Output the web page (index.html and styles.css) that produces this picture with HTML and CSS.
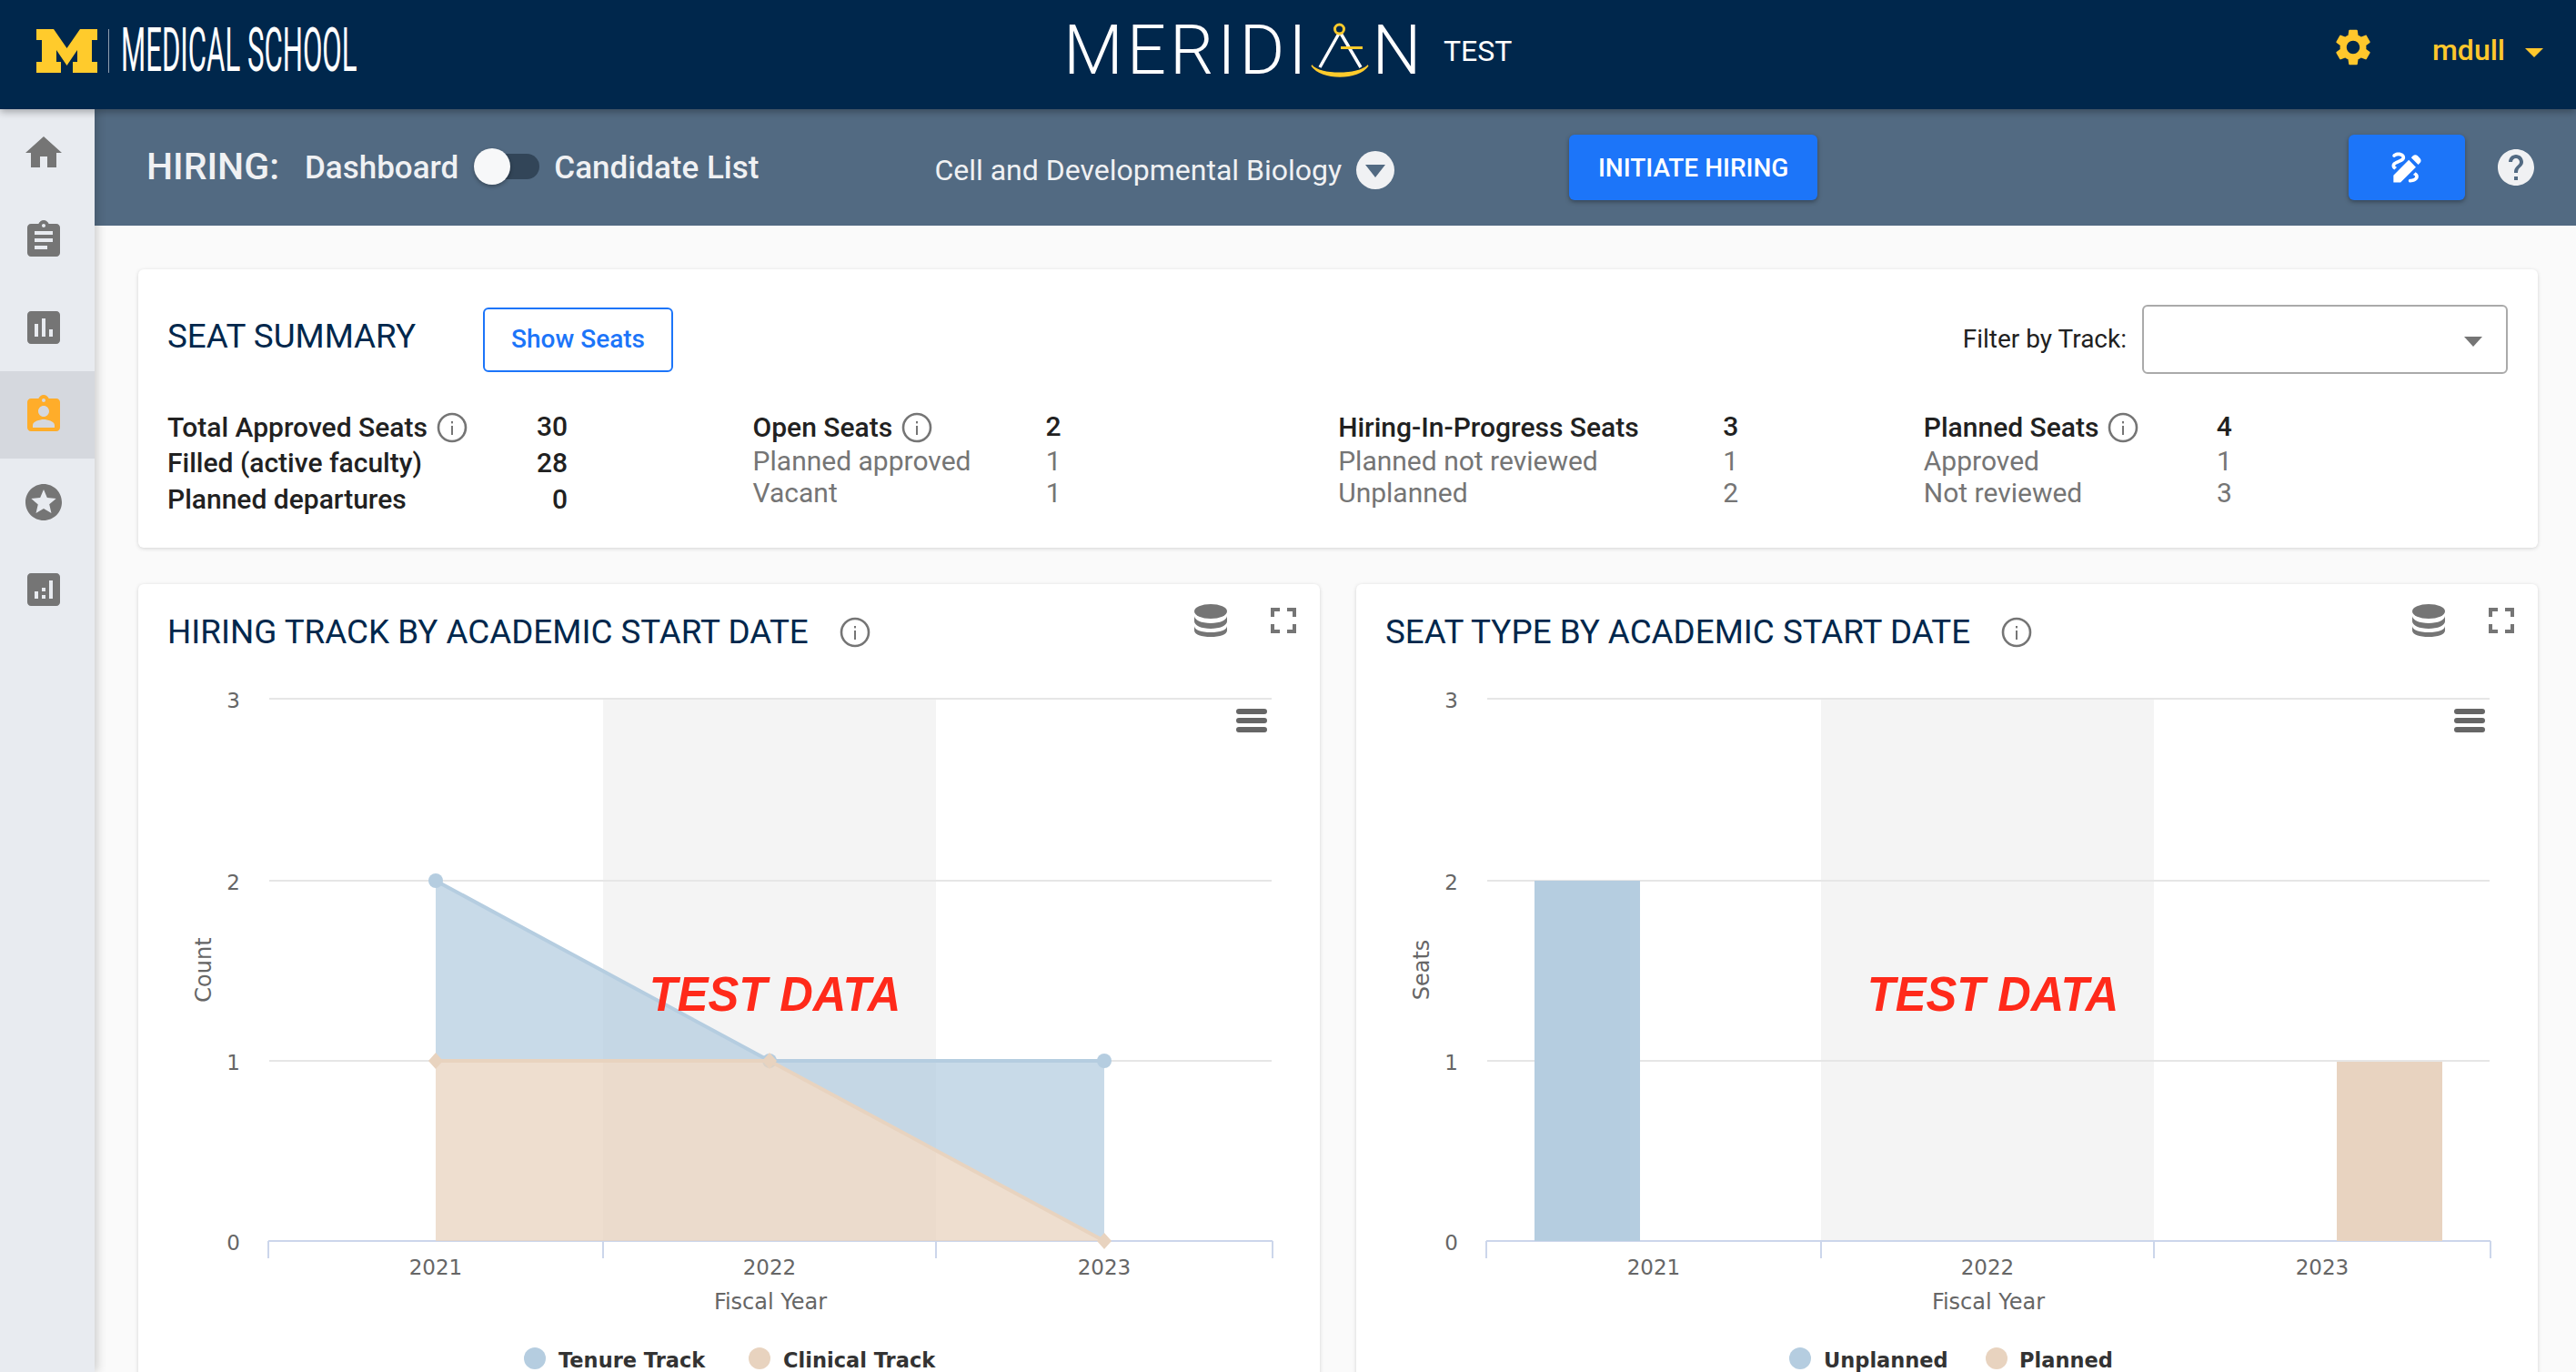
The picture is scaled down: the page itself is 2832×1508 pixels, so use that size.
FILE: index.html
```html
<!DOCTYPE html>
<html lang="en">
<head>
    <meta charset="UTF-8">
    <title>Meridian - Hiring Dashboard</title>
    <link rel="stylesheet" href="styles.css">
</head>
<body>
    <!-- shared icons -->
    <svg class="icon-defs" width="0" height="0">
        <symbol id="icon-info" viewBox="0 0 34 34">
            <circle cx="17" cy="17" r="15" fill="none" stroke="currentColor" stroke-width="2.6"/>
            <rect x="16" y="15" width="2" height="10"/>
            <rect x="16" y="10" width="2" height="2.4"/>
        </symbol>
        <symbol id="icon-db" viewBox="0 0 36 36">
            <ellipse cx="18" cy="8" rx="18" ry="8"/>
            <path d="M0 13c0 4.400 8 8 18 8s18-3.600 18-8v6c0 4.400-8 8-18 8s-18-3.600-18-8z"/>
            <path d="M0 24c0 4.400 8 7 18 7s18-2.600 18-7v5c0 4.400-8 7-18 7s-18-2.600-18-7z"/>
        </symbol>
        <symbol id="icon-expand" viewBox="0 0 24 24">
            <path d="M7 14H5v5h5v-2H7v-3zm-2-4h2V7h3V5H5v5zm12 7h-3v2h5v-5h-2v3zM14 5v2h3v3h2V5h-5z"/>
        </symbol>
    </svg>

    <div class="page">
        <header class="topbar">
            <div class="brand">
                <svg class="brand-m" viewBox="0 0 67 48"><path d="M0 0H19L33.500 21 48 0H67V12H61V36H67V48H40V36H45V23L33.500 40 22 23V36H27V48H0V36H6V12H0Z"/></svg>
                <span class="brand-rule"></span>
                <span class="brand-name"><span>MEDICAL SCHOOL</span></span>
            </div>
            <div class="app-name">
                <span>MERIDI</span>
                <svg class="app-a" viewBox="0 0 64 56">
                    <path d="M32 9L10 48M32 9L55 48" fill="none" stroke="#fff" stroke-width="3.500"/>
                    <ellipse cx="31.500" cy="6" rx="5" ry="5" fill="#00274c" stroke="#ffcb2c" stroke-width="3"/>
                    <rect x="33" y="25" width="24" height="3" fill="#ffcb2c"/>
                    <path d="M1 46C12 57 50 57 63 46C52 62 12 62 1 46Z" fill="#ffcb2c" stroke="#ffcb2c" stroke-width="1.500"/>
                </svg>
                <span>N</span>
            </div>
            <span class="app-env">TEST</span>
            <div class="user-area">
                <svg class="gear" viewBox="0 0 24 24"><path d="M19.140 12.940c.04-.3.060-.61.060-.94 0-.32-.02-.64-.07-.94l2.030-1.580c.18-.14.230-.41.120-.61l-1.920-3.320c-.12-.22-.37-.29-.59-.22l-2.390.96c-.5-.38-1.030-.7-1.620-.94l-.36-2.540c-.04-.24-.24-.41-.48-.41h-3.840c-.24 0-.43.170-.47.410l-.36 2.540c-.59.240-1.130.570-1.620.94l-2.390-.96c-.22-.08-.47 0-.59.220L2.740 8.870c-.12.210-.08.470.12.610l2.030 1.580c-.05.3-.09.630-.09.940s.02.640.07.940l-2.030 1.580c-.18.140-.23.410-.12.610l1.920 3.320c.12.220.37.290.59.220l2.390-.96c.5.380 1.030.7 1.620.94l.36 2.540c.05.240.24.410.48.410h3.840c.24 0 .44-.17.470-.41l.36-2.540c.59-.24 1.130-.56 1.620-.94l2.390.96c.22.080.47 0 .59-.22l1.920-3.320c.12-.22.070-.47-.12-.61l-2.010-1.580zM12 15.600c-1.980 0-3.600-1.620-3.600-3.600s1.620-3.600 3.600-3.600 3.600 1.620 3.600 3.600-1.620 3.600-3.600 3.600z"/></svg>
                <span class="user-name">mdull</span>
                <span class="user-caret"></span>
            </div>
        </header>

        <div class="body-row">
            <nav class="sidenav">
                <div class="nav-item"><svg viewBox="0 0 24 24"><path d="M10 20v-6h4v6h5v-8h3L12 3 2 12h3v8z"/></svg></div>
                <div class="nav-item"><svg viewBox="0 0 24 24"><path d="M19 3h-4.180C14.400 1.840 13.300 1 12 1c-1.300 0-2.400.84-2.820 2H5c-1.100 0-2 .9-2 2v14c0 1.100.9 2 2 2h14c1.100 0 2-.9 2-2V5c0-1.100-.9-2-2-2zm-7 0c.55 0 1 .45 1 1s-.45 1-1 1-1-.45-1-1 .45-1 1-1zm2 14H7v-2h7v2zm3-4H7v-2h10v2zm0-4H7V7h10v2z"/></svg></div>
                <div class="nav-item"><svg viewBox="0 0 24 24"><path d="M19 3H5c-1.100 0-2 .9-2 2v14c0 1.100.9 2 2 2h14c1.100 0 2-.9 2-2V5c0-1.100-.9-2-2-2zM9 17H7v-7h2v7zm4 0h-2V7h2v10zm4 0h-2v-4h2v4z"/></svg></div>
                <div class="nav-item nav-active"><svg viewBox="0 0 24 24"><path d="M19 3h-4.180C14.400 1.840 13.300 1 12 1c-1.300 0-2.400.84-2.820 2H5c-1.100 0-2 .9-2 2v14c0 1.100.9 2 2 2h14c1.100 0 2-.9 2-2V5c0-1.100-.9-2-2-2zm-7 0c.55 0 1 .45 1 1s-.45 1-1 1-1-.45-1-1 .45-1 1-1zm0 4c1.660 0 3 1.340 3 3s-1.340 3-3 3-3-1.340-3-3 1.340-3 3-3zm6 12H6v-1.400c0-2 4-3.100 6-3.100s6 1.100 6 3.100V19z"/></svg></div>
                <div class="nav-item"><svg viewBox="0 0 24 24"><path d="M11.990 2C6.470 2 2 6.480 2 12s4.470 10 9.990 10C17.520 22 22 17.520 22 12S17.520 2 11.990 2zm4.240 16L12 15.450 7.770 18l1.120-4.810-3.730-3.230 4.920-.42L12 5l1.920 4.530 4.920.42-3.730 3.230L16.230 18z"/></svg></div>
                <div class="nav-item"><svg viewBox="0 0 24 24"><path d="M19 3H5c-1.100 0-2 .9-2 2v14c0 1.100.9 2 2 2h14c1.100 0 2-.9 2-2V5c0-1.100-.9-2-2-2zM9 17H7v-4h2v4zm4 0h-2v-2h2v2zm0-4h-2v-2h2v2zm4 4h-2V7h2v10z"/></svg></div>
            </nav>

            <main class="main">
                <div class="subbar">
                    <span class="sub-title">HIRING:</span>
                    <span class="sub-link sub-dashboard">Dashboard</span>
                    <span class="toggle"><span class="toggle-thumb"></span></span>
                    <span class="sub-link">Candidate List</span>
                    <span class="dept">Cell and Developmental Biology</span>
                    <span class="dept-arrow"></span>
                    <button class="btn-primary btn-initiate">INITIATE HIRING</button>
                    <button class="btn-primary btn-edit">
                        <svg viewBox="0 0 24 24"><path d="M18.850 10.390l1.060-1.060c.78-.78.78-2.050 0-2.830L18.500 5.090c-.78-.78-2.050-.78-2.830 0l-1.060 1.060 4.240 4.240zm-5.660-2.830L4 16.760V21h4.240l9.190-9.190-4.240-4.250zM19 17.500c0 2.190-2.540 3.500-5 3.500-.55 0-1-.45-1-1s.45-1 1-1c1.540 0 3-.73 3-1.500 0-.47-.48-.87-1.230-1.200l1.480-1.480c1.070.63 1.750 1.470 1.750 2.680zM4.580 13.350C3.610 12.790 3 12.060 3 11c0-1.800 1.890-2.630 3.560-3.360C7.590 7.180 9 6.560 9 6c0-.41-.78-1-2-1-1.260 0-1.800.61-1.830.65-.35.41-.98.46-1.400.12-.41-.34-.49-.95-.15-1.380C3.730 4.240 4.760 3 7 3s4 1.320 4 3c0 1.870-1.930 2.720-3.640 3.470C6.420 9.880 5 10.500 5 11c0 .31.43.6 1.070.86l-1.490 1.490z"/></svg>
                    </button>
                    <svg class="help" viewBox="0 0 24 24"><path d="M12 2C6.480 2 2 6.480 2 12s4.480 10 10 10 10-4.480 10-10S17.520 2 12 2zm1 17h-2v-2h2v2zm2.070-7.750l-.9.92C13.450 12.900 13 13.500 13 15h-2v-.5c0-1.100.45-2.100 1.170-2.830l1.240-1.260c.37-.36.59-.86.59-1.410 0-1.100-.9-2-2-2s-2 .9-2 2H8c0-2.210 1.790-4 4-4s4 1.790 4 4c0 .88-.36 1.680-.93 2.250z"/></svg>
                </div>

                <div class="content">
                    <!-- Seat summary -->
                    <section class="card summary">
                        <div class="summary-head">
                            <h2 class="card-title">SEAT SUMMARY</h2>
                            <button class="btn-outline">Show Seats</button>
                            <span class="filter-label">Filter by Track:</span>
                            <div class="filter-select"><span class="filter-caret"></span></div>
                        </div>
                        <div class="stats">
                            <div class="stat-col stat-wide stat-strong">
                                <div class="stat-row stat-head"><span class="stat-label">Total Approved Seats<svg class="info"><use href="#icon-info"/></svg></span><span class="stat-total">30</span></div>
                                <div class="stat-row"><span>Filled (active faculty)</span><span>28</span></div>
                                <div class="stat-row"><span>Planned departures</span><span>0</span></div>
                            </div>
                            <div class="stat-col">
                                <div class="stat-row stat-head"><span class="stat-label">Open Seats<svg class="info"><use href="#icon-info"/></svg></span><span class="stat-total">2</span></div>
                                <div class="stat-row stat-sub"><span>Planned approved</span><span>1</span></div>
                                <div class="stat-row stat-sub"><span>Vacant</span><span>1</span></div>
                            </div>
                            <div class="stat-col stat-wide">
                                <div class="stat-row stat-head"><span class="stat-label">Hiring-In-Progress Seats</span><span class="stat-total">3</span></div>
                                <div class="stat-row stat-sub"><span>Planned not reviewed</span><span>1</span></div>
                                <div class="stat-row stat-sub"><span>Unplanned</span><span>2</span></div>
                            </div>
                            <div class="stat-col">
                                <div class="stat-row stat-head"><span class="stat-label">Planned Seats<svg class="info"><use href="#icon-info"/></svg></span><span class="stat-total">4</span></div>
                                <div class="stat-row stat-sub"><span>Approved</span><span>1</span></div>
                                <div class="stat-row stat-sub"><span>Not reviewed</span><span>3</span></div>
                            </div>
                        </div>
                    </section>

                    <div class="charts">
                        <!-- Chart 1 -->
                        <section class="card chart-card">
                            <div class="chart-head">
                                <h2 class="card-title">HIRING TRACK BY ACADEMIC START DATE</h2>
                                <svg class="info info-title"><use href="#icon-info"/></svg>
                                <svg class="tool-db"><use href="#icon-db"/></svg>
                                <svg class="tool-expand"><use href="#icon-expand"/></svg>
                            </div>
                            <svg class="chart" viewBox="152 742 1298 766">
                                <rect class="band" x="663" y="768" width="366" height="596"/>
                                <path class="grid" d="M296 768H1398M296 968H1398M296 1166H1398"/>
                                <path class="axis" d="M295 1364H1399M295 1364V1383M663 1364V1383M1029 1364V1383M1399 1364V1383"/>
                                <path class="area-blue" d="M479 968L846 1166H479ZM846 1166H1214V1364Z"/>
                                <path class="line-blue" d="M479 968L846 1166H1214"/>
                                <circle class="dot-blue" cx="479" cy="968" r="8"/>
                                <circle class="dot-blue" cx="846" cy="1166" r="8"/>
                                <circle class="dot-blue" cx="1214" cy="1166" r="8"/>
                                <path class="area-peach" d="M479 1166H846L1214 1364H479Z"/>
                                <path class="line-peach" d="M479 1166H846L1214 1364"/>
                                <path class="dot-peach" d="M479 1157l8 9-8 9-8-9zM846 1157l8 9-8 9-8-9zM1214 1355l8 9-8 9-8-9z"/>
                                <text class="tick" x="264" y="778" text-anchor="end">3</text>
                                <text class="tick" x="264" y="978" text-anchor="end">2</text>
                                <text class="tick" x="264" y="1176" text-anchor="end">1</text>
                                <text class="tick" x="264" y="1374" text-anchor="end">0</text>
                                <text class="tick" x="479" y="1401" text-anchor="middle">2021</text>
                                <text class="tick" x="846" y="1401" text-anchor="middle">2022</text>
                                <text class="tick" x="1214" y="1401" text-anchor="middle">2023</text>
                                <text class="axis-title" x="847" y="1439" text-anchor="middle">Fiscal Year</text>
                                <text class="axis-title" transform="translate(232 1066) rotate(-90)" text-anchor="middle">Count</text>
                                <circle class="legend-blue" cx="588" cy="1493" r="12"/>
                                <text class="legend" x="614" y="1503">Tenure Track</text>
                                <circle class="legend-peach" cx="835" cy="1493" r="12"/>
                                <text class="legend" x="861" y="1503">Clinical Track</text>
                                <path class="menu" d="M1362 782H1390M1362 792H1390M1362 802H1390"/>
                                <text class="stamp" transform="translate(852 1111) scale(0.955 1)" text-anchor="middle">TEST DATA</text>
                            </svg>
                        </section>

                        <!-- Chart 2 -->
                        <section class="card chart-card">
                            <div class="chart-head">
                                <h2 class="card-title">SEAT TYPE BY ACADEMIC START DATE</h2>
                                <svg class="info info-title"><use href="#icon-info"/></svg>
                                <svg class="tool-db"><use href="#icon-db"/></svg>
                                <svg class="tool-expand"><use href="#icon-expand"/></svg>
                            </div>
                            <svg class="chart" viewBox="152 742 1298 766">
                                <rect class="band" x="663" y="768" width="366" height="596"/>
                                <path class="grid" d="M296 768H1398M296 968H1398M296 1166H1398"/>
                                <path class="axis" d="M295 1364H1399M295 1364V1383M663 1364V1383M1029 1364V1383M1399 1364V1383"/>
                                <rect class="bar-blue" x="348" y="968" width="116" height="396"/>
                                <rect class="bar-peach" x="1230" y="1167" width="116" height="197"/>
                                <text class="tick" x="264" y="778" text-anchor="end">3</text>
                                <text class="tick" x="264" y="978" text-anchor="end">2</text>
                                <text class="tick" x="264" y="1176" text-anchor="end">1</text>
                                <text class="tick" x="264" y="1374" text-anchor="end">0</text>
                                <text class="tick" x="479" y="1401" text-anchor="middle">2021</text>
                                <text class="tick" x="846" y="1401" text-anchor="middle">2022</text>
                                <text class="tick" x="1214" y="1401" text-anchor="middle">2023</text>
                                <text class="axis-title" x="847" y="1439" text-anchor="middle">Fiscal Year</text>
                                <text class="axis-title" transform="translate(232 1066) rotate(-90)" text-anchor="middle">Seats</text>
                                <circle class="legend-blue" cx="640" cy="1493" r="12"/>
                                <text class="legend" x="666" y="1503">Unplanned</text>
                                <circle class="legend-peach" cx="856" cy="1493" r="12"/>
                                <text class="legend" x="881" y="1503">Planned</text>
                                <path class="menu" d="M1362 782H1390M1362 792H1390M1362 802H1390"/>
                                <text class="stamp" transform="translate(852 1111) scale(0.955 1)" text-anchor="middle">TEST DATA</text>
                            </svg>
                        </section>
                    </div>
                </div>
            </main>
        </div>
    </div>
</body>
</html>
```

FILE: styles.css
```css
* {
    box-sizing: border-box;
}

html, body {
    margin: 0;
    height: 100%;
    overflow: hidden;
}

body {
    font-family: Roboto, "Liberation Sans", sans-serif;
    color: #212121;
    background: #fafafa;
}

.icon-defs {
    position: absolute;
}

.page {
    height: 100vh;
    display: flex;
    flex-direction: column;
}

/* top bar */
.topbar {
    height: 120px;
    flex: none;
    display: flex;
    align-items: center;
    padding: 0 36px 0 40px;
    background: #00274c;
    position: relative;
    z-index: 3;
    box-shadow: 0 3px 8px rgba(0, 0, 0, 0.3);
}

.brand {
    width: 1129px;
    display: flex;
    align-items: center;
    flex: none;
    margin-top: -8px;
}

.brand-m {
    width: 67px;
    height: 48px;
    fill: #ffcb2c;
}

.brand-rule {
    width: 1px;
    height: 48px;
    margin: 0 13px 0 12px;
    background: #8f9fb0;
}

.brand-name {
    width: 261px;
    height: 48px;
    line-height: 48px;
    color: #fff;
    white-space: nowrap;
}

.brand-name span {
    display: inline-block;
    font-size: 66px;
    font-weight: 400;
    transform: scaleX(0.472);
    transform-origin: left center;
}

.app-name {
    width: 386px;
    display: flex;
    align-items: center;
    flex: none;
    color: #fff;
    font-size: 76px;
    font-weight: 300;
    line-height: 54px;
    letter-spacing: 4px;
    margin-top: -10px;
}

.app-a {
    width: 64px;
    height: 56px;
    margin: -2px 4px 0 0;
    flex: none;
    overflow: visible;
}

.app-env {
    margin: -8px 0 0 32px;
    color: #fff;
    font-size: 32px;
}

.user-area {
    margin-left: auto;
    display: flex;
    align-items: center;
    margin-top: -16px;
}

.gear {
    width: 48px;
    height: 48px;
    fill: #ffc72c;
}

.user-name {
    margin: 6px 0 0 63px;
    color: #ffc72c;
    font-size: 32px;
    font-weight: 500;
}

.user-caret {
    width: 0;
    height: 0;
    margin: 12px 0 0 22px;
    border-left: 10px solid transparent;
    border-right: 10px solid transparent;
    border-top: 10px solid #ffc72c;
}

.body-row {
    flex: 1;
    display: flex;
    min-height: 0;
}

/* side nav */
.sidenav {
    width: 104px;
    flex: none;
    background: #e8ebf0;
    position: relative;
    z-index: 2;
    box-shadow: 3px 0 10px rgba(0, 0, 0, 0.18);
}

.nav-item {
    height: 96px;
    display: flex;
    align-items: center;
    justify-content: center;
    padding-right: 8px;
}

.nav-item svg {
    width: 48px;
    height: 48px;
    fill: #757575;
}

.nav-active {
    background: #d5d8de;
}

.nav-active svg {
    fill: #ffad2a;
}

.main {
    flex: 1;
    min-width: 0;
    display: flex;
    flex-direction: column;
}

/* hiring bar */
.subbar {
    height: 128px;
    flex: none;
    display: flex;
    align-items: center;
    padding-left: 57px;
    background: #526a82;
    color: #f0f1f3;
}

.sub-title {
    font-size: 41px;
    font-weight: 500;
    width: 174px;
    margin-top: -3px;
}

.sub-link {
    font-size: 35px;
    font-weight: 500;
    margin-top: 1px;
}

.toggle {
    width: 72px;
    height: 28px;
    margin: -3px 16px 0 17px;
    border-radius: 14px;
    background: #324558;
    position: relative;
    flex: none;
}

.toggle-thumb {
    position: absolute;
    left: 0;
    top: -6px;
    width: 40px;
    height: 40px;
    border-radius: 50%;
    background: #f7f8f9;
    box-shadow: 0 2px 4px rgba(0, 0, 0, 0.3);
}

.dept {
    margin: 5px 0 0 193px;
    font-size: 32px;
}

.dept-arrow {
    width: 42px;
    height: 42px;
    margin: 6px 0 0 16px;
    border-radius: 50%;
    background: #f0f1f3;
    position: relative;
    flex: none;
}

.dept-arrow::after {
    content: '';
    position: absolute;
    left: 10px;
    top: 15px;
    border-left: 11px solid transparent;
    border-right: 11px solid transparent;
    border-top: 14px solid #526a82;
}

.btn-primary {
    height: 72px;
    border: 0;
    border-radius: 6px;
    background: #1c75f9;
    color: #fff;
    font-family: inherit;
    font-weight: 500;
    font-size: 28px;
    box-shadow: 0 2px 5px rgba(0, 0, 0, 0.35);
    padding: 0;
    flex: none;
}

.btn-initiate {
    width: 273px;
    margin-left: 192px;
}

.btn-edit {
    width: 128px;
    margin-left: 584px;
    display: flex;
    align-items: center;
    justify-content: center;
}

.btn-edit svg {
    width: 44px;
    height: 44px;
    fill: #fff;
}

.help {
    width: 48px;
    height: 48px;
    margin-left: 32px;
    fill: #f0f1f3;
    flex: none;
}

/* content */
.content {
    flex: 1;
    min-height: 0;
    padding: 48px 42px 0 48px;
    background: #fafafa;
}

.card {
    background: #fff;
    border-radius: 6px;
    box-shadow: 0 1px 4px rgba(0, 0, 0, 0.16);
}

.card-title {
    margin: 0;
    font-size: 36.800px;
    font-weight: 400;
    line-height: 48px;
    color: #00274c;
    white-space: nowrap;
}

.summary {
    height: 306px;
    padding: 39px 33px 0 32px;
}

.summary-head {
    height: 76px;
    display: flex;
    align-items: center;
}

.summary-head .card-title {
    margin-top: -7px;
}

.btn-outline {
    width: 209px;
    height: 71px;
    margin-left: 74px;
    border: 2px solid #1c75f9;
    border-radius: 6px;
    background: #fff;
    color: #1c75f9;
    font-family: inherit;
    font-size: 28px;
    font-weight: 500;
    padding: 0 0 2px;
    flex: none;
}

.filter-label {
    margin: -2px 0 0 auto;
    font-size: 28px;
}

.filter-select {
    width: 402px;
    height: 76px;
    margin-left: 17px;
    border: 2px solid #aaa;
    border-radius: 6px;
    position: relative;
    flex: none;
}

.filter-caret {
    position: absolute;
    right: 26px;
    top: 33px;
    border-left: 10px solid transparent;
    border-right: 10px solid transparent;
    border-top: 11px solid #757575;
}

.stats {
    display: grid;
    grid-template-columns: repeat(4, 643.600px);
    margin-top: 39px;
}

.stat-col {
    width: 339px;
    font-size: 30px;
    font-weight: 500;
}

.stat-wide {
    width: 440px;
}

.stat-row {
    height: 39px;
    display: flex;
    justify-content: space-between;
    align-items: center;
    white-space: nowrap;
}

.stat-strong .stat-row + .stat-row {
    height: 39.500px;
}

.stat-sub {
    height: 35px;
    font-weight: 400;
    color: #757575;
}

.stat-total {
    margin-top: -3px;
}

.stat-label {
    display: flex;
    align-items: center;
}

.info {
    width: 34px;
    height: 34px;
    margin-left: 10px;
    color: #757575;
    fill: #757575;
    flex: none;
}

/* charts */
.charts {
    display: flex;
    gap: 40px;
    margin-top: 40px;
}

.chart-card {
    width: 1299px;
    height: 900px;
    flex: none;
}

.chart-head {
    height: 100px;
    padding: 16px 16px 0 32px;
    display: flex;
    align-items: flex-start;
}

.chart-head .card-title {
    margin-top: 13px;
}

.info-title {
    margin: 20px 0 0 34px;
}

.tool-db {
    width: 36px;
    height: 36px;
    margin: 6px 0 0 auto;
    fill: #757575;
}

.tool-expand {
    width: 48px;
    height: 48px;
    margin-left: 38px;
    fill: #757575;
}

.chart {
    display: block;
    width: 1298px;
    height: 766px;
    font-family: "DejaVu Sans", sans-serif;
}

.band {
    fill: #f4f4f4;
}

.grid {
    stroke: #e6e6e6;
    stroke-width: 2;
    fill: none;
}

.axis {
    stroke: #ccd6eb;
    stroke-width: 2;
    fill: none;
}

.area-blue {
    fill: #b5cde0;
    fill-opacity: 0.75;
}

.line-blue {
    stroke: #b5cde0;
    stroke-width: 4;
    fill: none;
}

.dot-blue {
    fill: #b5cde0;
}

.area-peach {
    fill: #e8d3bf;
    fill-opacity: 0.75;
}

.line-peach {
    stroke: #e8d3bf;
    stroke-width: 4;
    fill: none;
}

.dot-peach {
    fill: #e8d3bf;
}

.bar-blue {
    fill: #b5cde0;
}

.bar-peach {
    fill: #e8d3c0;
}

.tick {
    font-size: 23px;
    fill: #666;
}

.axis-title {
    font-size: 24px;
    fill: #666;
}

.legend {
    font-size: 22.500px;
    font-weight: 700;
    fill: #333;
}

.legend-blue {
    fill: #b5cde0;
}

.legend-peach {
    fill: #e8d3bf;
}

.menu {
    stroke: #666;
    stroke-width: 6;
    stroke-linecap: round;
    fill: none;
}

.stamp {
    font-family: "Liberation Sans", sans-serif;
    font-size: 53px;
    font-weight: 700;
    font-style: italic;
    fill: #ff2a1a;
}
```
